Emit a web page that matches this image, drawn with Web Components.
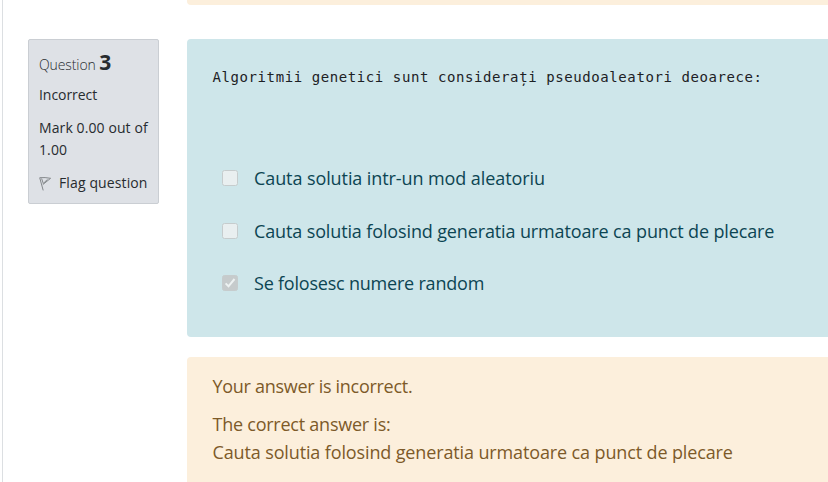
<!DOCTYPE html>
<html lang="ro"><head><meta charset="utf-8"><title>Quiz review</title>
<style>
body{margin:0;background:#fff;width:828px;height:482px;overflow:hidden;font-family:"Open Sans","Noto Sans",sans-serif}
</style></head><body>
<quiz-review></quiz-review>
<script>
const define=(name,html)=>customElements.define(name,class extends HTMLElement{
  constructor(){super();this.attachShadow({mode:'open'}).innerHTML=html;}
});
define('text-line',`<style>:host{display:block;white-space:nowrap}</style><slot></slot>`);
define('quiz-alert',`<style>:host{display:block;box-sizing:border-box;border-radius:4px 0 0 4px;padding:0 0 0 25.5px;background:#fcefdc;color:#7d5a29;font-size:18px;line-height:28px}</style><slot></slot>`);
define('flag-icon',`<style>:host{display:block;width:12px;height:15px}svg{display:block}</style>
<svg width="12" height="15" viewBox="0 0 12 15" fill="none" stroke="#83878a" stroke-width="1" stroke-linejoin="round"><path d="M.7 1.7L4.2 14.4M.8 1.7Q6 1.2 11.6 2.3L3.8 8.6M2.6 2.5L4.3 7.5L8.4 3.4"/></svg>`);
define('question-info',`<style>
:host{display:block;box-sizing:border-box;width:131px;height:165px;border:1px solid #caced3;border-radius:2px;background:#dee1e6;color:#272b2f;padding:9px 0 0 10px;font-size:14px;line-height:22px}
h3{margin:0 0 9px;font-size:14px;font-weight:300;line-height:26px;height:26px;white-space:nowrap}
h3 span{letter-spacing:-.1px}
b{font-size:21px;font-weight:700}
.state{margin-bottom:11px;letter-spacing:-.05px}.grade{margin-bottom:11px;letter-spacing:.1px}
.flag{display:flex;gap:8px;align-items:center;letter-spacing:.12px}
</style><h3><span>Question</span> <b>3</b></h3>
<text-line class="state">Incorrect</text-line>
<div class="grade"><text-line>Mark 0.00 out of</text-line><text-line>1.00</text-line></div>
<div class="flag"><flag-icon></flag-icon><text-line>Flag question</text-line></div>`);
define('answer-option',`<style>
:host{display:flex;align-items:center;height:28px;gap:16px;color:#0c4553;font-size:18px;line-height:28px}
.box{box-sizing:border-box;width:16px;height:16px;border:1px solid #c6cccd;border-radius:2.5px;background:#e9eff0}
.box svg{display:none}:host([checked]) .box{background:#c6cbcc}:host([checked]) svg{display:block}
</style><span class="box"><svg width="14" height="14" viewBox="0 0 14 14" fill="none" stroke="#edf2f2" stroke-width="2"><path d="M2.6 7.4L5.5 10.3L11.5 3"/></svg></span><text-line><slot></slot></text-line>`);
define('quiz-question',`<style>
:host{display:block;box-sizing:border-box;height:298px;padding:26px 0 0 25.5px;border-radius:4px 0 0 4px;background:#cee6ea}
pre{margin:0;height:99px;font:14px/24px "DejaVu Sans Mono",monospace;letter-spacing:.59px;color:#1d2125}
.list{display:grid;row-gap:24.5px;padding:0 0 0 9.5px}
</style><pre>Algoritmii genetici sunt considerați pseudoaleatori deoarece:</pre>
<div class="list"><answer-option style="letter-spacing:-.09px">Cauta solutia intr-un mod aleatoriu</answer-option>
<answer-option style="letter-spacing:-.13px">Cauta solutia folosind generatia urmatoare ca punct de plecare</answer-option>
<answer-option checked style="letter-spacing:-.21px">Se folosesc numere random</answer-option></div>`);
define('quiz-review',`<style>
:host{display:grid;box-sizing:border-box;width:826px;height:482px;overflow:hidden;margin-left:2px;border-left:1px solid #dcdfe2;grid-template-columns:131px 641px;column-gap:28px;padding-left:25px}
question-info{margin-top:39px}
main{display:block}
.prev{height:5px;border-radius:0 0 0 4px}quiz-question{margin-top:34px}
.feedback{margin-top:20px;height:125px;border-radius:4px 0 0 0;padding-top:15px}.first{margin-bottom:10px}
</style><question-info></question-info><main><quiz-alert class="prev"></quiz-alert><quiz-question></quiz-question>
<quiz-alert class="feedback"><text-line class="first" style="letter-spacing:-.29px">Your answer is incorrect.</text-line><text-line style="letter-spacing:-.24px">The correct answer is:</text-line><text-line style="letter-spacing:-.13px">Cauta solutia folosind generatia urmatoare ca punct de plecare</text-line></quiz-alert></main>`);
</script></body></html>
